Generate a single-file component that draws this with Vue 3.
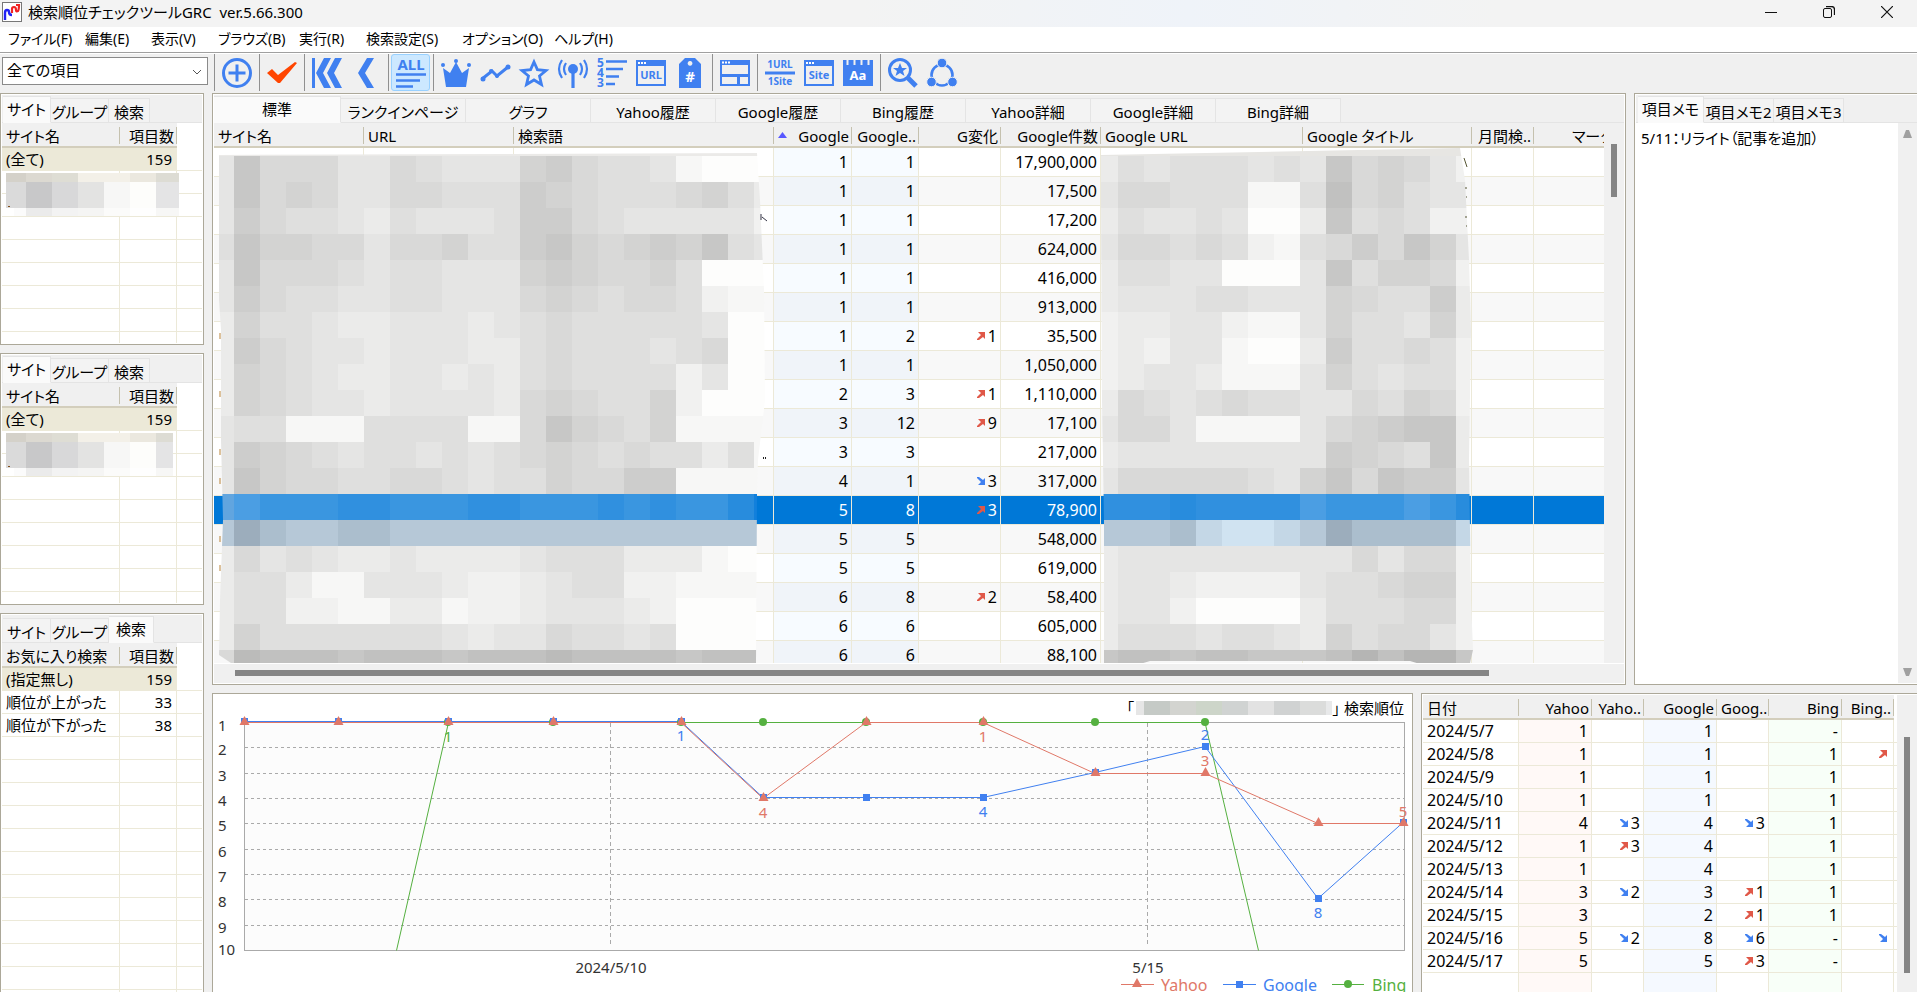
<script setup>
import { ref } from 'vue'

const menus = ['ファイル(F)', '編集(E)', '表示(V)', 'ブラウズ(B)', '実行(R)', '検索設定(S)', 'オプション(O)', 'ヘルプ(H)']

const toolGroups = [
  [{ id: 'add', label: '項目追加' }],
  [{ id: 'check', label: 'チェック' }],
  [{ id: 'first', label: '最初' }, { id: 'prev', label: '前へ' }],
  [{ id: 'all', label: '全て', active: true }],
  [
    { id: 'crown', label: '上位' }, { id: 'trend', label: '変化' }, { id: 'star', label: 'お気に入り' },
    { id: 'antenna', label: '圏内' }, { id: 'rank', label: '順位' }, { id: 'url', label: 'URL' }, { id: 'tag', label: 'タグ' }
  ],
  [{ id: 'layout', label: 'レイアウト' }],
  [{ id: 'oneurl', label: '1URL 1Site' }, { id: 'site', label: 'Site' }, { id: 'word', label: '語句' }],
  [{ id: 'find', label: '検索' }, { id: 'ring', label: '連携' }]
]

const sideTabs = ['サイト', 'グループ', '検索']
const sidePanels = [
  { active: 0, name: 'サイト名', rows: [['(全て)', 159]], blank: 8, masked: 173 },
  { active: 0, name: 'サイト名', rows: [['(全て)', 159]], blank: 8, masked: 167 },
  { active: 2, name: 'お気に入り検索', rows: [['(指定無し)', 159], ['順位が上がった', 33], ['順位が下がった', 38]], blank: 13, masked: 0 }
]

const mainTabs = ['標準', 'ランクインページ', 'グラフ', 'Yahoo履歴', 'Google履歴', 'Bing履歴', 'Yahoo詳細', 'Google詳細', 'Bing詳細']

const rows = [
  [1, 1, '', '', '17,900,000'], [1, 1, '', '', '17,500'], [1, 1, '', '', '17,200'],
  [1, 1, '', '', '624,000'], [1, 1, '', '', '416,000'], [1, 1, '', '', '913,000'],
  [1, 2, 'up', 1, '35,500'], [1, 1, '', '', '1,050,000'], [2, 3, 'up', 1, '1,110,000'],
  [3, 12, 'up', 9, '17,100'], [3, 3, '', '', '217,000'], [4, 1, 'down', 3, '317,000'],
  [5, 8, 'up', 3, '78,900'], [5, 5, '', '', '548,000'], [5, 5, '', '', '619,000'],
  [6, 8, 'up', 2, '58,400'], [6, 6, '', '', '605,000'], [6, 6, '', '', '88,100']
]
const selectedRow = 12

const history = [
  ['2024/5/7', 1, null, 1, null, '-', null],
  ['2024/5/8', 1, null, 1, null, 1, ['up', '']],
  ['2024/5/9', 1, null, 1, null, 1, null],
  ['2024/5/10', 1, null, 1, null, 1, null],
  ['2024/5/11', 4, ['down', 3], 4, ['down', 3], 1, null],
  ['2024/5/12', 1, ['up', 3], 4, null, 1, null],
  ['2024/5/13', 1, null, 4, null, 1, null],
  ['2024/5/14', 3, ['down', 2], 3, ['up', 1], 1, null],
  ['2024/5/15', 3, null, 2, ['up', 1], 1, null],
  ['2024/5/16', 5, ['down', 2], 8, ['down', 6], '-', ['down', '']],
  ['2024/5/17', 5, null, 5, ['up', 3], '-', null],
  ['', '', null, '', null, '', null],
  ['', '', null, '', null, '', null]
]
const tints = ['', 'ty', '', 'tg', '', 'tb', '']

const memoTabs = ['項目メモ', '項目メモ2', '項目メモ3']
const memo = ref('5/11：リライト（記事を追加）')
const filter = ref('全ての項目')

/* Privacy mosaic: one character per 26px tile, higher is darker */
const blue = ['#1280dc', '#288cdd', '#3090df', '#3a96e0', '#4b9ee3', '#61a5df']
const pale = ['#d0e3f1', '#c4d7e6', '#b6c8d7', '#abbecd', '#9cadbc']
const leftTiles = [
  '4966644654447865541000', '4967644665558765556753', '4865543544458865444442', '5977664667558976787954',
  '4966654554447876675000', '4865544554446765665211', '3755433444345655555400', '3865443444335655545600',
  '3765433443435655552400', '3765443444436765572000', '4551115555116976571111', '4876545545456765655351',
  '4976655665455766881111', 'B54333223332233323233100', 'P24322332222222222222221', '3645433433334555333100',
  '3553114443223455221111', '3552211331223444320000', '3755555554344655450000', '6baaa9aaa9aaabaaaa9aaa'
]
const rightTiles = [
  '354555454967642', '466555115a67544', '354454003956522', '466565215686974', '355440004957762',
  '344455444765583', '233442114755473', '232441003855652', '234431114754552', '365456554465762',
  '466411114678993', '344444444876593', '466666547969884', 'B222122224333431', 'P222310012433331',
  '344444444464662', '344322224556772', '344200003555662', '355545543756642', '9aa9aa999acacc9'
]
function tiles(lines) {
  const out = []
  lines.forEach((line, r) => {
    const palette = line[0] === 'B' ? blue : line[0] === 'P' ? pale : null
    const body = palette ? line.slice(1) : line
    ;[...body].forEach((ch, c) => {
      const level = parseInt(ch, 16)
      const g = 253 - level * 6
      out.push({ x: c * 26, y: r * 26, fill: palette ? palette[level] : `rgb(${g},${g},${g - 1})` })
    })
  })
  return out
}
const leftMosaic = tiles(leftTiles)
const rightMosaic = tiles(rightTiles)
const sideTop = ['#d4d1c9', '#dcd9d1', '#deddd4', '#f3f0e8', '#f3f0e8', '#ebe8df', '#dddcd4']
const sideMid = ['#dadada', '#c8c8c9', '#d8d8d9', '#e3e3e2', '#f7f7f6', '#fdfdfb', '#e4e4e5']
const sideLow = ['#fbfbfb', '#ebebeb', '#f3f3f3', '#f5f5f4', '#fbfbfa', '#fefefe', '#f7f7f6']

/* Rank chart */
const px = [244, 338, 448, 553, 681, 763, 866, 983, 1095, 1205, 1318, 1403]
const py = rank => 722 + (rank - 1) * 25 + Math.round((rank - 1) / 3)
const yahoo = [1, 1, 1, 1, 1, 4, 1, 1, 3, 3, 5, 5]
const google = [1, 1, 1, 1, 1, 4, 4, 4, 3, 2, 8, 5]
const line = (data, dy) => data.map((v, i) => `${px[i]},${py(v) + dy}`).join(' ')
const tri = (x, y) => `M${x} ${y - 6}L${x + 5} ${y + 3}H${x - 5}Z`
const marks = [
  ['1', 448, 742, '#55b040'], ['1', 681, 741, '#4080f0'], ['4', 763, 818, '#e07868'], ['1', 983, 742, '#e07868'],
  ['4', 983, 817, '#4080f0'], ['2', 1205, 740, '#4080f0'], ['3', 1205, 766, '#e07868'], ['8', 1318, 918, '#4080f0'],
  ['5', 1403, 817, '#e07868']
]
const titleMask = ['#e6e6e6', '#c5cac6', '#d3d4d0', '#cdd5c9', '#d0d3d2', '#e2e2e2', '#d0d2d2', '#dbdcdb', '#e8e9ea']
</script>

<template>
  <div class="app">
    <header class="titlebar">
      <svg class="appicon" width="20" height="20" viewBox="0 0 20 20">
        <rect x=".5" y=".5" width="19" height="19" fill="#fff" stroke="#777" />
        <path d="M3 18v-7q0-3 2-3 2 0 2 2 0 3 3 3" fill="none" stroke="#2222f5" stroke-width="2.400" />
        <path d="M10 11V7q0-2 2-2 2 0 2 3 0 2 2 1 1-1 1-7M14 3h4" fill="none" stroke="#f02222" stroke-width="2.200" />
      </svg>
      <h1>検索順位チェックツールGRC&nbsp; ver.5.66.300</h1>
      <button class="win" aria-label="最小化"><svg width="12" height="12"><path d="M0 6.500H12" stroke="#111" /></svg></button>
      <button class="win" aria-label="元に戻す"><svg width="12" height="12" fill="none" stroke="#111"><rect x=".5" y="2.500" width="8" height="9" rx="1.500" /><path d="M3 .5h5.500q3 0 3 3V9" stroke-width="1.300" /></svg></button>
      <button class="win" aria-label="閉じる"><svg width="12" height="12"><path d="M0 0L12 12M12 0L0 12" stroke="#111" stroke-width="1.200" /></svg></button>
    </header>

    <nav class="menubar">
      <button v-for="m in menus" :key="m">{{ m }}</button>
    </nav>

    <div class="toolbar">
      <label class="combo">
        <select v-model="filter" aria-label="表示する項目"><option>全ての項目</option></select>
        <svg width="10" height="6"><path d="M1 1l4 4 4-4" fill="none" stroke="#555" /></svg>
      </label>
      <div v-for="(group, gi) in toolGroups" :key="gi" class="tools">
        <button v-for="t in group" :key="t.id" :class="{ on: t.active }" :aria-label="t.label">
          <svg width="30" height="30" viewBox="0 0 30 30" fill="none" stroke="#4080f0" stroke-width="3">
            <template v-if="t.id === 'add'"><circle cx="15" cy="15" r="13.500" /><path d="M15 6.500V23.500M6.500 15H23.500" /></template>
            <path v-else-if="t.id === 'check'" d="M0 15l5-4 6 6L28 4l2 1L13 25h-2z" fill="#ff4500" stroke="none" />
            <path v-else-if="t.id === 'first'" d="M0 0h3v30H0zM4 15L12 0h7L11 15l8 15h-7zM15 15L23 0h7L22 15l8 15h-7z" fill="#4080f0" stroke="none" />
            <path v-else-if="t.id === 'prev'" d="M7 15L16 0h7L14 15l9 15h-7z" fill="#4080f0" stroke="none" />
            <template v-else-if="t.id === 'all'">
              <text x="15" y="12" text-anchor="middle" class="glyph" font-size="15">ALL</text>
              <path d="M0 16.500H30M0 22.500H24M0 28.500H17" stroke-width="2.600" />
            </template>
            <g v-else-if="t.id === 'crown'" fill="#4080f0" stroke="none"><path d="M2 10l7 5 6-11 6 11 7-5-3 19H5z" /><circle cx="2" cy="7" r="2" /><circle cx="15" cy="3" r="2" /><circle cx="28" cy="7" r="2" /></g>
            <g v-else-if="t.id === 'trend'"><path d="M2 21L12 13l5 5L28 9" stroke-width="3" /><g fill="#4080f0" stroke="none"><circle cx="3" cy="21" r="2.500" /><circle cx="11" cy="13" r="2" /><circle cx="17" cy="18" r="2" /><circle cx="28" cy="9" r="2.500" /></g></g>
            <path v-else-if="t.id === 'star'" d="M15 4l3.400 7.600 8.600.9-6.500 5.500 2 8.500-7.500-4.500-7.500 4.500 2-8.500-6.500-5.500 8.600-.9z" stroke-width="2.800" />
            <g v-else-if="t.id === 'antenna'" stroke-width="2.200"><circle cx="15" cy="11" r="5" fill="#4080f0" stroke="none" /><path d="M15 12V30" stroke-width="3.200" /><path d="M8 5q-4 6 0 12M22 5q4 6 0 12M4 2q-6 9 0 18M26 2q6 9 0 18" /></g>
            <g v-else-if="t.id === 'rank'"><text x="0" y="9" class="glyph" font-size="12">5</text><text x="0" y="19" class="glyph" font-size="12">4</text><text x="0" y="29" class="glyph" font-size="12">3</text><path d="M9 3.500H30M9 11H26M9 18.500H22M9 26H18" stroke-width="2.400" /></g>
            <g v-else-if="t.id === 'url' || t.id === 'site'"><path d="M0 2h30v26H0zM2 8v18h26V8z" fill="#4080f0" fill-rule="evenodd" stroke="none" /><path d="M2 5H10" stroke="#fff" stroke-width="2" stroke-dasharray="2 1" /><text x="15" y="21" text-anchor="middle" class="glyph" font-size="11">{{ t.id === 'url' ? 'URL' : 'Site' }}</text></g>
            <g v-else-if="t.id === 'tag'"><path d="M4 6L10 0h10l6 6v24H4zM15 3a2.400 2.400 0 1 0 .1 0z" fill="#4080f0" fill-rule="evenodd" stroke="none" /><text x="15" y="24" text-anchor="middle" class="glyph light" font-size="15">#</text></g>
            <g v-else-if="t.id === 'layout'"><path d="M0 2h30v26H0zM2 7v9h26V7zM2 19v7h15v-7zM20 19v7h8v-7z" fill="#4080f0" fill-rule="evenodd" stroke="none" /><path d="M2 4.500H10" stroke="#fff" stroke-width="2" stroke-dasharray="2 1" /></g>
            <g v-else-if="t.id === 'oneurl'"><text x="15" y="10" text-anchor="middle" class="glyph" font-size="10">1URL</text><path d="M0 15H30" stroke-width="3" /><text x="15" y="27" text-anchor="middle" class="glyph" font-size="10">1Site</text></g>
            <g v-else-if="t.id === 'word'"><path d="M0 2h30v26H0z" fill="#4080f0" stroke="none" /><path d="M4.500 1V7M11.500 1V7M18.500 1V7M25.500 1V7" stroke="#f0f0f0" stroke-width="2" /><text x="15" y="22" text-anchor="middle" class="glyph light" font-size="13">Aa</text></g>
            <g v-else-if="t.id === 'find'"><circle cx="12" cy="12" r="10.500" /><path d="M20 20l8 8" stroke-width="5" /><path d="M12 5l2 5h5l-4 3 1.500 5L12 15l-4.500 3L9 13l-4-3h5z" fill="#4080f0" stroke="none" /></g>
            <g v-else><circle cx="15" cy="17" r="10.500" stroke-width="2.600" /><g fill="#4080f0" stroke="#f0f0f0" stroke-width="1"><circle cx="15" cy="5" r="4.800" /><circle cx="4.500" cy="24" r="4.800" /><circle cx="25.500" cy="24" r="4.800" /></g></g>
          </svg>
        </button>
      </div>
    </div>

    <main class="work">
      <div class="side">
        <section v-for="(p, pi) in sidePanels" :key="pi" class="panel">
          <div class="tabs" role="tablist">
            <button v-for="(t, i) in sideTabs" :key="t" role="tab" :class="['side' + i, { active: i === p.active }]">{{ t }}</button>
          </div>
          <div class="sheet">
            <table class="side-table">
              <colgroup><col class="c-name"><col class="c-count"><col></colgroup>
              <thead><tr><th>{{ p.name }}</th><th class="num">項目数</th><td class="void"></td></tr></thead>
              <tbody>
                <tr v-for="(r, i) in p.rows" :key="r[0]" :class="{ picked: i === 0 }"><td>{{ r[0] }}</td><td class="num">{{ r[1] }}</td><td></td></tr>
                <tr v-for="n in p.blank" :key="n"><td></td><td></td><td></td></tr>
              </tbody>
            </table>
            <svg v-if="p.masked" class="side-mask" :width="p.masked" height="44" shape-rendering="crispEdges">
              <g v-for="(c, i) in sideMid" :key="i">
                <rect :x="i ? i * 26 - 6 : 0" y="0" :width="i ? 26 : 20" height="9" :fill="sideTop[i]" />
                <rect :x="i ? i * 26 - 6 : 0" y="9" :width="i ? 26 : 20" height="26" :fill="c" />
                <rect :x="i ? i * 26 - 6 : 8" y="35" :width="i ? 26 : 12" height="8" :fill="sideLow[i]" />
              </g>
              <path d="M2 33h2" stroke="#84501c" />
            </svg>
          </div>
        </section>
      </div>

      <div class="content">
        <div class="row top">
          <section class="panel main">
            <div class="tabs wide" role="tablist">
              <button v-for="(t, i) in mainTabs" :key="t" role="tab" :class="{ active: i === 0 }">{{ t }}</button>
            </div>
            <div class="scroller">
              <div class="sheet">
                <table class="main-table">
                  <colgroup><col class="w150"><col class="w150"><col class="w260"><col class="w78"><col class="w67"><col class="w82"><col class="w100"><col class="w202"><col class="w169"><col class="w62"><col></colgroup>
                  <thead>
                    <tr>
                      <th>サイト名</th><th>URL</th><th>検索語</th>
                      <th class="num"><svg class="sort" width="9" height="6"><path d="M4.500 0L9 6H0z" fill="#5858ff" /></svg>Google</th>
                      <th class="num">Google..</th><th class="num">G変化</th><th class="num">Google件数</th>
                      <th>Google URL</th><th>Google タイトル</th><th class="num">月間検..</th><th class="mark">マーク</th>
                    </tr>
                  </thead>
                  <tbody>
                    <tr v-for="(r, i) in rows" :key="i" :class="{ selected: i === selectedRow }">
                      <td></td><td></td><td></td>
                      <td class="num tg">{{ r[0] }}</td><td class="num tg">{{ r[1] }}</td>
                      <td class="num"><svg v-if="r[2]" class="arrow" width="8" height="8" viewBox="0 0 8 8"><path v-if="r[2] === 'up'" d="M1 0h7v7L6 5 2 8H0V7l4-4z" fill="#e05848" /><path v-else d="M1 8h7V1L6 3 2 0H0v1l4 4z" fill="#4080f0" /></svg>{{ r[3] }}</td>
                      <td class="num">{{ r[4] }}</td><td></td><td></td><td></td><td></td>
                    </tr>
                  </tbody>
                </table>
                <svg class="mask-left" width="548" height="512" viewBox="219 153 548 512">
                  <defs>
                    <clipPath id="clipLeft"><path d="M219 155L757 153 760 200 764 290 765 400 758 460 757 495 756 663 450 663 234 665 219 655 220 600 223 520 221 440 221 330 219 300z" /></clipPath>
                  </defs>
                  <g clip-path="url(#clipLeft)">
                    <rect x="219" y="153" width="548" height="3" fill="#ebeae8" />
                    <g transform="translate(208 156)" shape-rendering="crispEdges"><rect v-for="(t, i) in leftMosaic" :key="i" :x="t.x" :y="t.y" width="26" height="26" :fill="t.fill" /></g>
                  </g>
                  <path d="M761 214v6M762 217l5 4" stroke="#334" fill="none" />
                  <path d="M763 458h1M765 458h1" stroke="#222" stroke-width="2" />
                  <path d="M220 333v6M220 391v6M220 449v6M220 478v6M220 536v6M220 565v6" stroke="#b98338" />
                </svg>
                <svg class="mask-right" width="372" height="517" viewBox="1101 148 372 517">
                  <defs>
                    <clipPath id="clipRight"><path d="M1101 155L1460 148 1465 180 1469 260 1471 330 1469 460 1470 530 1471 600 1473 650 1470 663 1420 664 1410 661 1150 661 1140 664 1104 664 1104 520 1102 400 1101 200z" /></clipPath>
                  </defs>
                  <g clip-path="url(#clipRight)">
                    <rect x="1101" y="148" width="372" height="8" fill="#e7e6e3" />
                    <g transform="translate(1092 156)" shape-rendering="crispEdges"><rect v-for="(t, i) in rightMosaic" :key="i" :x="t.x" :y="t.y" width="26" height="26" :fill="t.fill" /></g>
                  </g>
                  <path d="M1464 158l3 9M1466 187v2M1466 197h1M1466 216v2M1466 226h1" stroke="#553" fill="none" />
                </svg>
              </div>
              <div class="vbar"><i></i></div>
              <div class="hbar"><i></i></div>
            </div>
          </section>

          <section class="panel memo">
            <div class="tabs memotabs" role="tablist">
              <button v-for="(t, i) in memoTabs" :key="t" role="tab" :class="{ active: i === 0 }">{{ t }}</button>
            </div>
            <div class="memo-body">
              <textarea v-model="memo" aria-label="項目メモ"></textarea>
              <div class="arrows">
                <svg width="10" height="8"><path d="M3 0h3l3 8H0z" fill="#a0a0a0" /></svg>
                <svg width="10" height="8"><path d="M3 8h3l3-8H0z" fill="#a0a0a0" /></svg>
              </div>
            </div>
          </section>
        </div>

        <div class="row bottom">
          <section class="panel chart">
            <svg viewBox="214 695 1197 310" class="plot">
              <rect x="244.500" y="722.500" width="1160" height="228" fill="#fcfcfc" stroke="#aaa" />
              <path v-for="n in 8" :key="n" :d="`M245 ${py(n + 1) + 0.5}H1404`" stroke="#aaa" stroke-dasharray="3 3" />
              <path d="M610.500 723V947M1147.500 723V947" stroke="#aaa" stroke-dasharray="4 3" />
              <g class="axis">
                <text v-for="n in 10" :key="n" x="218" :y="n === 1 ? 731 : n === 10 ? 955 : py(n) + 8">{{ n }}</text>
                <text x="611" y="973" text-anchor="middle">2024/5/10</text>
                <text x="1148" y="973" text-anchor="middle">5/15</text>
              </g>
              <g fill="none">
                <polyline points="396.500,950.500 448.500,722.500 1205,722.500 1258.500,950.500" stroke="#55b040" />
                <polyline :points="line(google, -0.5)" stroke="#4080f0" />
                <polyline :points="line(yahoo, 0.5)" stroke="#e07868" />
              </g>
              <circle v-for="i in [2, 3, 4, 5, 6, 7, 8, 9]" :key="'b' + i" :cx="px[i]" cy="722" r="4" fill="#55b040" />
              <rect v-for="(v, i) in google" :key="'g' + i" :x="px[i] - 3" :y="py(v) - 4" width="7" height="7" fill="#4080f0" />
              <path v-for="(v, i) in yahoo" :key="'y' + i" :d="tri(px[i] + 0.5, py(v))" fill="#e07868" />
              <g class="marks"><text v-for="(m, i) in marks" :key="i" :x="m[1]" :y="m[2]" :fill="m[3]" text-anchor="middle">{{ m[0] }}</text></g>
              <text x="1134" y="714" text-anchor="end" class="jp">「</text>
              <text x="1404" y="714" text-anchor="end" class="jp">」 検索順位</text>
              <g shape-rendering="crispEdges"><rect v-for="(c, i) in titleMask" :key="i" :x="i ? 1118 + i * 26 : 1136" y="701" :width="i === 8 ? 6 : i ? 26 : 8" height="14" :fill="c" /></g>
              <g class="legend">
                <path d="M1121 984.500H1154" stroke="#e07868" /><path :d="tri(1137, 984)" fill="#e07868" /><text x="1161" y="991" fill="#e07868">Yahoo</text>
                <path d="M1223 984.500H1256" stroke="#4080f0" /><rect x="1236" y="981" width="7" height="7" fill="#4080f0" /><text x="1263" y="991" fill="#4080f0">Google</text>
                <path d="M1332 984.500H1364" stroke="#55b040" /><circle cx="1348" cy="984" r="4" fill="#55b040" /><text x="1372" y="991" fill="#55b040">Bing</text>
              </g>
            </svg>
          </section>

          <section class="panel history">
            <div class="scroller">
              <div class="sheet">
                <table class="history-table">
                  <colgroup><col class="h-date"><col class="h-rank"><col class="h-diff"><col class="h-rank"><col class="h-diff"><col class="h-rank"><col class="h-diff"><col></colgroup>
                  <thead><tr><th>日付</th><th class="num">Yahoo</th><th class="num">Yaho..</th><th class="num">Google</th><th class="num">Goog..</th><th class="num">Bing</th><th class="num">Bing..</th><td class="void"></td></tr></thead>
                  <tbody>
                    <tr v-for="(h, i) in history" :key="i">
                      <td v-for="(v, c) in h" :key="c" :class="[tints[c], { num: c > 0 }]">
                        <template v-if="Array.isArray(v)"><svg class="arrow" width="8" height="8" viewBox="0 0 8 8"><path v-if="v[0] === 'up'" d="M1 0h7v7L6 5 2 8H0V7l4-4z" fill="#e05848" /><path v-else d="M1 8h7V1L6 3 2 0H0v1l4 4z" fill="#4080f0" /></svg>{{ v[1] }}</template>
                        <template v-else>{{ v }}</template>
                      </td>
                      <td></td>
                    </tr>
                  </tbody>
                </table>
              </div>
              <div class="vbar"><i></i></div>
            </div>
          </section>
        </div>
      </div>
    </main>
  </div>
</template>

<style>
html, body { margin: 0; overflow: hidden; }
</style>

<style scoped>
.app { height: 100vh; display: flex; flex-direction: column; background: #f0f0f0; color: #000; font: 15px/20px "Noto Sans", "Noto Sans CJK JP", sans-serif; font-feature-settings: "palt"; overflow: hidden; }
.app * { box-sizing: border-box; }
button, select, textarea { font: inherit; font-feature-settings: inherit; color: inherit; border: 0; padding: 0; margin: 0; background: none; border-radius: 0; }
.titlebar { flex: none; height: 27px; display: flex; align-items: center; padding: 0 1px 3px 2px; background: linear-gradient(90deg, #f3f3f3 45%, #eff3f9 62%, #f3f3f3 78%); }
h1 { flex: 1; margin: 0 0 0 6px; font-size: 15px; line-height: 20px; font-weight: 400; }
.win { width: 58px; height: 24px; display: grid; place-items: center; }
.menubar { flex: none; height: 26px; display: grid; grid-template-columns: 77px 66px 67px 81px 67px 96px 92px 74px; padding-left: 8px; background: #fff; border-bottom: 1px solid #a0a0a0; font-size: 14px; }
.menubar button { text-align: left; white-space: nowrap; padding-bottom: 1px; }
.toolbar { flex: none; height: 40px; display: flex; align-items: flex-start; padding: 0 0 0 2px; border-top: 1px solid #fff; }
.combo { position: relative; width: 206px; height: 28px; margin: 3px 6px 0 0; display: block; }
.combo select { width: 100%; height: 100%; appearance: none; background: #fff; border: 1px solid #8a8a8a; padding: 0 24px 2px 4px; line-height: 20px; }
.combo svg { position: absolute; right: 6px; top: 12px; pointer-events: none; }
.tools { display: flex; height: 37px; padding: 0 3px 0 2px; border-left: 1px solid #909090; }
.tools button { width: 39px; height: 37px; display: grid; place-items: center; border: 1px solid transparent; border-radius: 3px; }
.tools button.on { background: #cce8ff; border-color: #99d1ff; }
.tools svg { overflow: visible; }
.glyph { font-family: "Noto Sans", sans-serif; font-weight: 700; fill: #4080f0; stroke: none; }
.glyph.light { fill: #fff; }

.work { flex: 1; min-height: 0; display: grid; grid-template-columns: 204px minmax(0, 1fr); gap: 8px; }
.side { min-height: 0; display: grid; grid-template-rows: minmax(0, 252fr) minmax(0, 252fr) minmax(0, 379fr); gap: 8px; }
.content { min-height: 0; display: grid; grid-template-rows: minmax(0, 592fr) minmax(0, 299fr); gap: 8px; }
.row { display: grid; gap: 8px; min-height: 0; }
.top { grid-template-columns: minmax(0, 1fr) 283px; }
.bottom { grid-template-columns: minmax(0, 1fr) 496px; }
.panel { display: flex; flex-direction: column; min-width: 0; min-height: 0; border: 1px solid #aca899; padding: 1px; background: #fff; overflow: hidden; }
.side .panel:last-child, .chart, .history { border-bottom: 0; padding-bottom: 0; }
.memo, .history { border-right: 0; padding-right: 0; }

.tabs { flex: none; height: 28px; display: flex; align-items: flex-end; padding-left: 1px; background: linear-gradient(#e4e4e4, #e4e4e4) 0 100% / 100% 1px no-repeat #f0f0f0; }
.tabs button { height: 25px; padding-top: 2px; background: #f3f3f3; border: 1px solid #e4e4e4; border-left: 0; white-space: nowrap; text-align: center; }
.tabs button.active { height: 27px; padding: 0 0 2px; background: #fafafa; border-bottom-color: #fafafa; }
.side0 { width: 48px; }
.side1 { width: 58px; }
.side2 { width: 41px; }
.side2.active { width: 45px; }
.wide { padding-left: 0; }
.wide button { width: 125px; }
.wide button.active { width: 127px; }
.memotabs { padding-left: 2px; }
.memotabs button { width: 70px; }
.memotabs button.active { width: 66px; }

.sheet { position: relative; flex: 1; min-width: 0; min-height: 0; overflow: hidden; background: #fff; }
table { table-layout: fixed; border-collapse: separate; border-spacing: 0; width: 100%; }
th { position: relative; height: 25px; padding: 2px 3px 0 4px; font-weight: 400; text-align: left; white-space: nowrap; overflow: hidden; border-bottom: 2px solid #d3cebc; background: linear-gradient(#c5c1ae, #c5c1ae) 100% 4px / 1px 17px no-repeat #f0f0f0; }
td { height: 23px; padding: 0 4px; white-space: nowrap; overflow: hidden; border-right: 1px solid #ece9d8; border-bottom: 1px solid #ece9d8; }
td:last-child { border-right: 0; }
.void { border: 0; }
.num { text-align: right; }
td.num { padding-right: 3px; font-size: 16px; }
.c-name { width: 118px; }
.c-count { width: 57px; }
.side-table th, .side-table td { line-height: 20px; }
.side-table td.num { padding-right: 4px; font-size: 15px; }
.side-table .picked td { background: #ece9d8; }
.side-table .picked td:last-child { background: #fff; }
.side-mask { position: absolute; left: 4px; top: 50px; }

.scroller { flex: 1; min-height: 0; display: grid; grid-template-columns: minmax(0, 1fr) 20px; grid-template-rows: minmax(0, 1fr) auto; background: #f0f0f0; }
.main-table { width: 1430px; }
.main-table td { height: 29px; }
.main-table tbody tr:nth-child(even) td { background: #f8f8f8; }
.main-table td.tg { background: #f7fbff; }
.main-table tbody tr:nth-child(even) td.tg { background: #f0f4f9; }
.main-table tbody tr.selected td { background: #0078d7; color: #fff; }
.main-table .mark { padding-left: 38px; }
.w150 { width: 150px; } .w260 { width: 260px; } .w78 { width: 78px; } .w67 { width: 67px; } .w82 { width: 82px; }
.w100 { width: 100px; } .w202 { width: 202px; } .w169 { width: 169px; } .w62 { width: 62px; }
.sort { float: left; margin-top: 6px; }
.arrow { margin-right: 3px; vertical-align: 2px; }
.mask-left { position: absolute; left: 5px; top: 30px; }
.mask-right { position: absolute; left: 887px; top: 25px; }
.vbar i { display: block; width: 6px; height: 53px; margin: 21px 0 0 7px; background: #858585; }
.hbar { grid-column: 1 / -1; height: 20px; border-top: 1px solid #fff; }
.hbar i { display: block; height: 6px; margin: 6px 135px 0 21px; background: #858585; }

.memo-body { flex: 1; display: flex; min-height: 0; }
textarea { flex: 1; min-width: 0; resize: none; outline: 0; padding: 5px 5px; background: #fff; line-height: 20px; }
.arrows { width: 19px; display: flex; flex-direction: column; justify-content: space-between; align-items: center; padding: 7px 0; background: #f0f0f0; }

.plot { display: block; width: 100%; flex: none; }
.axis, .marks, .legend { font-size: 15px; }
.axis { fill: #333; }
.legend { font-size: 16px; }
.jp { font-size: 15px; fill: #000; }

.h-date { width: 96px; } .h-rank { width: 73px; } .h-diff { width: 52px; }
.history td { font-size: 16px; }
.history .ty { background: #fff9f7; }
.history .tg { background: #f5f9ff; }
.history .tb { background: #f8fff8; }
.history .vbar i { height: 236px; margin: 42px 0 0 7px; }
</style>
